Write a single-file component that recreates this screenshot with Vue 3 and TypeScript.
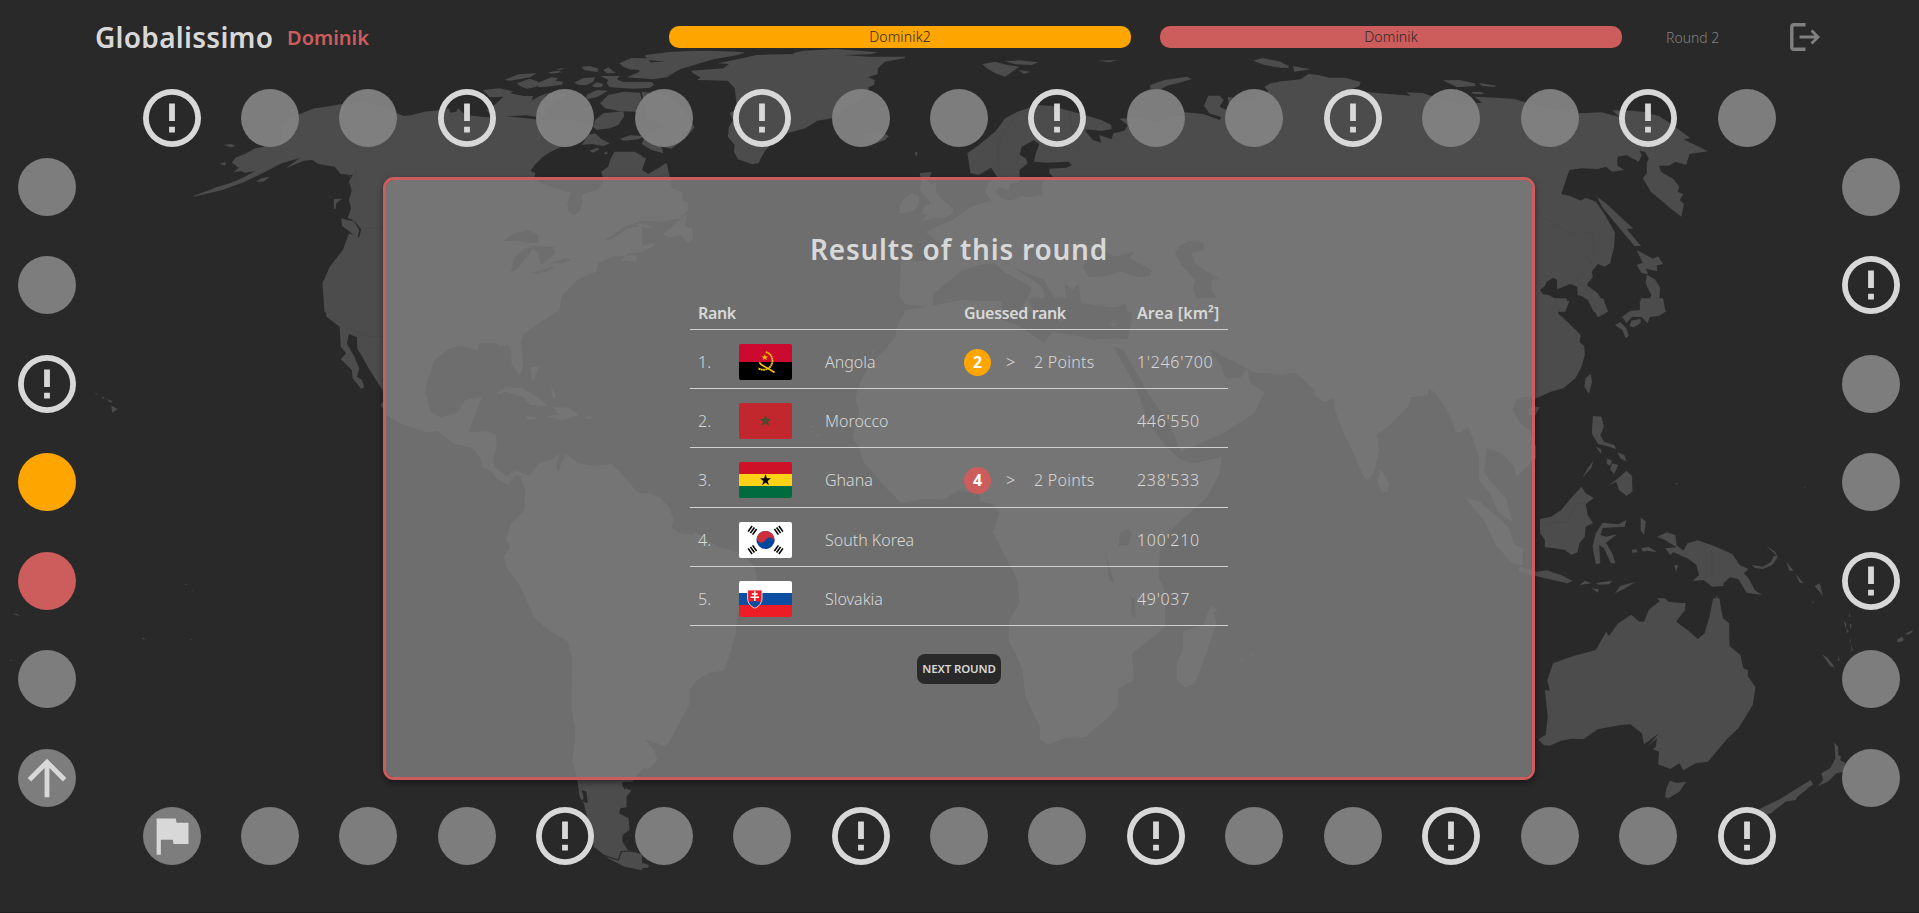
<script setup lang="ts">
type Field = 'plain' | 'event' | 'start' | 'arrow' | 'orange' | 'red'

interface Player {
  name: string
  color: Field
}

interface Guess {
  rank: number
  points: number
  color: Field
}

interface Country {
  flag: 'ao' | 'ma' | 'gh' | 'kr' | 'sk'
  name: string
  area: string
  guess?: Guess
}

const legend: Record<string, Field> = {
  o: 'plain',
  '!': 'event',
  s: 'start',
  a: 'arrow',
  y: 'orange',
  r: 'red',
}
const fields = (row: string): Field[] => row.split('').map((c) => legend[c])

const sides = [
  { name: 'top', fields: fields('!oo!oo!oo!oo!oo!o') },
  { name: 'left', fields: fields('oo!yroa') },
  { name: 'right', fields: fields('o!oo!oo') },
  { name: 'bottom', fields: fields('sooo!oo!oo!oo!oo!') },
]

const players: Player[] = [
  { name: 'Dominik2', color: 'orange' },
  { name: 'Dominik', color: 'red' },
]

const countries: Country[] = [
  { flag: 'ao', name: 'Angola', area: "1'246'700", guess: { rank: 2, points: 2, color: 'orange' } },
  { flag: 'ma', name: 'Morocco', area: "446'550" },
  { flag: 'gh', name: 'Ghana', area: "238'533", guess: { rank: 4, points: 2, color: 'red' } },
  { flag: 'kr', name: 'South Korea', area: "100'210" },
  { flag: 'sk', name: 'Slovakia', area: "49'037" },
]
</script>

<template>
  <div class="page">
    <svg class="map" viewBox="0 0 1919 913" aria-hidden="true">
      <!-- north-west -->
      <g transform="scale(.40816 .33333)">
        <path class="land" d="M474 588L530 562 565 549 600 530 625 513 600 518 590 513 572 517 585 503 568 488 578 472 600 462 625 445 660 438 690 425 690 385 705 360 735 342 770 325 800 320 840 311 900 305 940 320 970 338 988 348 1010 345 1040 335 1075 331 1100 325 1103 338 1118 335 1122 325 1140 345 1190 352 1250 350 1290 355 1330 360 1400 360 1455 375 1440 400 1400 438 1375 441 1350 455 1330 470 1310 495 1300 513 1312 520 1308 535 1320 545 1350 560 1380 572 1400 578 1390 610 1393 635 1405 645 1420 635 1428 600 1425 583 1465 570 1480 540 1473 515 1490 500 1495 480 1505 455 1555 455 1573 467V662L1530 680 1480 722 1500 715 1540 685 1573 680V755L1540 760 1520 782 1560 785V765L1500 770 1465 790 1460 815 1440 825 1410 842 1395 865 1375 890 1370 935H795L790 850 808 800 840 750 855 700 880 712 885 688 870 665 852 653 860 625 855 600 862 570 855 545 864 525 835 522 820 500 780 492 765 480 745 482 700 505 735 474 690 490 650 515 600 545 545 570 474 590Z" />
        <path class="land" d="M836 655L868 665 880 690 875 718 862 700 838 678ZM818 597L838 596 824 610 822 628 818 626ZM627 545L640 535 662 530 645 545ZM538 490L555 487 550 497ZM548 434L568 433 578 438 565 442Z" />
        <path class="water" d="M1230 722L1260 700 1290 690 1318 702 1320 730 1290 728 1265 722ZM1252 815L1260 775 1285 745 1310 740 1285 780 1265 810ZM1300 738L1358 740 1360 762 1340 780 1325 795 1318 760ZM1300 820L1350 800 1358 805 1320 822ZM1345 790L1385 775 1400 780 1375 790Z" />
        <path class="border" d="M882 425L845 462M820 480L880 560 862 580M885 685H938M870 500L875 550" />
      </g>
      <!-- canadian arctic -->
      <g transform="translate(480 40) scale(.33333)">
        <path class="land" d="M72 120L115 103 170 100 150 112 90 122ZM110 130L150 116 175 125 170 140 140 146 120 138ZM170 130L215 112 235 115 225 122 250 125 245 134 200 140 175 142ZM205 97L235 92 245 97 215 101ZM228 87L255 84 240 90ZM305 80L330 78 355 86 352 96 330 93 312 90ZM282 128L310 114 345 112 340 125 318 136 295 134ZM335 137L350 127 370 132 365 142 345 142ZM370 90L385 82 398 92 408 99 380 100ZM362 108L420 108 410 118 430 126 515 126 522 134 510 143 460 146 390 142 380 130 385 120ZM418 70L455 54 500 55 512 66 515 78 480 90 450 88 430 80ZM495 48L560 38 640 32 780 36 740 44 700 58 640 76 600 88 560 112 520 118 440 112 480 95 515 85 520 66 570 66 500 55ZM8 150L60 145 100 155 90 160 130 168 160 168 155 182 175 170 200 160 190 180 200 190 200 225 175 232 140 226 100 228 40 235 20 210 50 190 70 170 30 172ZM360 190L385 165 430 155 480 158 485 175 470 200 470 215 420 214 375 205ZM200 160L260 158 230 190 200 200ZM320 165L350 150 385 152 350 172 320 178ZM340 262L345 240 370 220 430 214 433 228 415 255 390 265 350 270ZM305 315L325 285 345 280 365 298 390 310 370 318 335 312ZM328 332L352 323 358 328 340 338ZM370 342L382 333 382 343ZM420 296L450 286 495 288 475 298 430 302ZM485 155L560 165 610 210 644 262 620 290 575 326 545 320 550 340 515 330 485 312 500 280 560 260 500 230Z" />
      </g>
      <!-- north -->
      <g transform="translate(640 0) scale(.40816 .33333)">
        <path class="land" d="M-6 465L15 475 5 510 20 522 50 500 65 488 73 530 78 565 103 575 105 600 118 608 118 630 98 655 50 665-6 662ZM115 640L88 670 55 705 75 712 100 705 118 728 130 715 128 685 110 680ZM-4 668L30 680 15 685-4 678ZM-4 740L38 730 30 742-4 758Z" />
        <path class="land" d="M12 165L80 155 170 152 257 157 240 165 170 180 110 200 60 230 30 235 0 225-4 190 60 185 20 180ZM125 212L205 205 218 192 190 190 250 175 285 165 375 162 378 158 400 152 480 147 583 157 565 163 500 165 560 170 650 170 648 175 600 185 583 205 582 222 560 232 575 240 573 255 560 262 560 275 540 300 510 320 490 345 470 355 435 362 405 385 365 398 340 410 315 440 305 455 290 490 275 493 240 478 230 455 232 435 215 410 218 380 228 360 220 340 238 325 232 265 215 242 140 240 148 232 130 220ZM0 248L30 247 32 258 0 264ZM590 396L610 408 600 420 575 432 545 425 550 405ZM673 458L680 455 678 470ZM838 192L870 185 900 195 930 200 915 212 895 230 870 220 850 205ZM893 184L930 181 975 187 960 195 920 193ZM928 210L958 215 940 222ZM1120 182L1170 180 1150 187ZM1250 255L1285 240 1340 230 1352 237 1320 248 1290 258 1275 268 1250 266ZM1502 182L1525 174 1573 186V204L1530 195Z" />
        <path class="land" d="M802 460L830 435 870 395 895 355 925 335 950 325 975 315 1010 318 1045 330 1090 345 1130 360 1155 375 1155 388 1130 393 1090 388 1095 400 1110 420 1130 428 1125 405 1155 418 1160 400 1187 392 1195 375 1175 356 1230 350 1260 370 1300 350 1335 345 1325 335 1380 342 1420 360 1425 352 1395 340 1382 318 1392 287 1420 287 1430 300 1420 320 1445 335 1440 290 1480 300 1540 275 1530 260 1545 250 1573 244V935H890L885 900 790 905 700 920 650 912 635 890 640 780 690 783 715 780 738 735 700 695 765 660 805 625 830 612 860 603 845 575 855 545 870 540 875 530 860 503 830 525 810 520Z" />
        <path class="land" d="M685 520L715 516 705 545 725 550 725 575 745 605 768 625 765 640 745 655 715 655 683 668 705 648 690 640 697 620 712 610 700 590 685 570 690 545ZM640 605L665 578 685 590 680 620 665 635 635 640Z" />
        <path class="water" d="M930 545V510L950 490 945 475 930 465 935 440 965 420 978 432 970 460 965 485 1000 488 1050 485 1058 495 1045 503 1003 506 1003 520 1015 535 985 545 985 585 960 590 935 588 910 602 885 594 870 575 880 560 905 572 905 550ZM1085 800L1095 780 1130 752 1165 770 1210 755 1200 775 1255 810 1250 828 1220 832 1180 815 1140 828 1100 830ZM1310 760L1325 735 1345 723 1380 728 1382 750 1350 760 1360 790 1395 820 1418 835 1400 840 1400 870 1420 905 1370 905 1355 870 1360 840 1330 800ZM715 935L720 880 750 850 785 815 830 795 870 790 890 815 960 860 950 895 930 935ZM875 770L985 860 1000 935H1195L1180 925 1080 910 1075 850 1060 870 1040 850 1045 910 1020 900 990 840 920 805Z" />
        <path class="border" d="M880 525L875 450 890 390 930 340 985 325M1050 335L1065 420 1075 445 1060 465" />
      </g>
      <!-- north-east -->
      <g transform="translate(1280 0) scale(.40751 .33333)">
        <path class="land" d="M-5 245L50 238 70 222 95 225 120 233 160 233 198 246 195 258 175 268 230 278 320 287 310 277 350 279 400 300 450 312 496 308 478 290 530 293 575 297 610 310 680 330 735 340 790 337 833 351 815 331 860 332 890 335 930 348 960 372 1007 414 990 418 1050 454 1005 462 997 494 970 485 955 497 930 497 935 515 965 537 980 560 976 575 990 583 981 600 991 612 985 650 960 627 910 575 890 535 900 520 900 490 905 475 895 455 882 452 888 465 880 485 850 465 828 470 828 497 845 510 815 515 800 500 780 507 740 505 710 510 690 583 710 587 738 602 750 593 775 605 795 640 822 697 820 740 810 790 797 800 780 792 765 815 768 830 752 855 780 880 805 935H770L755 900 740 888 730 885 730 860 712 852 680 868 680 840 670 833 655 845 650 858 638 870 645 883 660 885 680 900 710 903 700 935H-5ZM0 186L22 198 20 204 0 203ZM32 198L75 208 35 215ZM400 241L440 240 478 250 480 258 435 262ZM488 249L533 257 525 261 495 257ZM468 276L495 276 500 282 475 281Z" />
        <path class="land" d="M778 590L800 610 867 686 850 686 886 738 870 738 830 680 790 620ZM875 750L915 776 928 769 940 792 924 797 926 814 898 806 903 822 888 820 875 795 890 788ZM900 824L920 838 933 865 931 895 948 935H883V900L900 922 911 885 897 850Z" />
        <path class="border" d="M626 640L670 670 720 705M748 698L765 700 772 750 750 760 768 800 740 820 718 855" />
      </g>
      <!-- west -->
      <g transform="translate(0 300) scale(.40816 .33333)">
        <path class="land" d="M795-5V15L800 50 832 80 835 140 848 160 835 178 862 210 864 235 885 267 892 262 887 240 875 230 880 205 868 170 850 130 855 102 875 112 875 145 892 180 903 205 937 270 940 300 933 315 947 345 980 370 1045 398 1070 392 1110 430 1158 445 1180 480 1180 500 1205 515 1215 535 1245 555 1262 525 1275 530 1287 570 1285 630 1268 650 1250 675 1240 720 1250 740 1235 770 1240 800 1275 860 1304 935H1573V580L1560 575 1540 545 1500 492 1450 498 1415 488 1400 475 1388 463 1375 490 1368 520 1362 500 1370 460 1350 480 1320 488 1298 528 1265 513 1240 527 1212 500 1208 480 1217 430 1215 405 1190 393 1148 397 1165 340 1180 292 1140 300 1120 340 1080 352 1055 335 1042 275 1045 250 1065 180 1095 150 1125 138 1155 145 1170 150 1175 128 1215 128 1225 140 1245 135 1253 155 1253 190 1272 227 1282 200 1277 120 1285 100 1320 70 1368 30 1370-5ZM1210 285L1240 262 1280 265 1320 295 1343 318 1300 315 1280 290 1240 275ZM1340 347L1370 345 1355 322 1395 323 1418 345 1380 360 1345 352ZM1288 348L1310 350 1315 358 1293 359ZM1434 348L1453 349 1450 356 1435 356ZM1300 200L1320 200 1305 250ZM1350 260L1362 290 1355 300Z" />
        <path class="land" d="M272 316L288 327 275 338ZM233 279L238 281 236 284ZM249 288L257 294 252 297ZM260 297L276 304 271 308ZM453 852L457 852 456 856ZM471 869L473 872 471 874Z" />
        <path class="border" d="M848 82L870 92 905 109H938" />
      </g>
      <!-- centre -->
      <g transform="translate(640 300) scale(.40816 .33333)">
        <path class="land" d="M-5 580L25 580 50 595 70 620 82 655 78 685 100 700 130 705 135 695 190 740 250 760 280 800 287 830 275 870 240 935H-5ZM650 30L630 80 625 110 600 150 560 200 540 245 528 290 538 340 520 410 535 440 550 490 600 560 640 608 700 597 740 600 780 572 830 580 835 605 865 612 880 640 865 700 895 770 925 840 932 935H1285V870L1270 830 1275 740 1300 690 1390 590 1420 520 1425 470 1360 490 1325 480 1290 440 1245 370 1215 260 1160 140 1185 150 1240 270 1300 380 1325 455 1430 400 1505 340 1530 275 1495 250 1488 205 1470 235 1435 235 1420 190 1385 135 1365 150 1400 150 1470 195 1500 215 1573 224V-5H1200L1205 60 1195 118 1160 115 1110 120 1060 105 1010 95 990 128 925 75 875 55 890 30 885 3 790 0 700 20ZM1405 915L1415 935H1395Z" />
        <path class="water" d="M950-5H1070L1075 15 1150 30 1190 10 1195 45 1150 50 1050 40 1000 50 960 25ZM1175 700L1200 685 1205 705 1195 735 1173 738ZM1140 755L1150 800 1163 852 1150 840ZM1200 880L1212 935H1203Z" />
        <path class="land" d="M1020 55L1040 60 1030 65ZM1150 70L1175 68 1160 78ZM518 155L525 165 520 168ZM570 150L575 155 568 165ZM415 375L425 380 420 384ZM435 403L445 405 430 413Z" />
      </g>
      <!-- east -->
      <g transform="translate(1280 300) scale(.40751 .33333)">
        <path class="land" d="M-5 223L40 220 85 270 85 285 108 305 132 296 135 330 150 380 180 460 205 530 215 542 232 515 243 450 238 402 265 380 318 315 320 292 362 286 365 268 378 275 405 320 425 370 428 395 445 397 462 380 475 420 488 470 488 540 515 580 535 635 570 665 555 595 520 550 500 515 508 443 545 460 575 500 580 530 628 475 628 440 615 395 590 370 570 330 580 300 600 290 628 295 665 275 695 265 725 235 740 200 748 165 747 140 735 125 738 105 705 65 682 40 690 15 708 8 702-5H-5ZM758-5H793L805 35 780 52 768 25ZM885-5H940L946 35 930 48 908 50 902 70 888 52 865 50 850 68 840 52 835 55 860 32 888 30ZM822 75L835 67 850 85 856 108 848 114 840 90ZM862 62L885 56 885 70 868 82 858 78Z" />
        <path class="land" d="M245 505L268 550 265 575 250 578 240 550ZM452 590L490 605 560 680 575 735 596 745 595 795 570 790 530 735 500 660ZM590 800L630 815 655 811 675 820 690 825 718 843 705 850 650 835 585 815ZM608 330L620 318 637 322 627 345 612 345ZM762 222L766 245 758 282 747 260 750 235ZM768 348L789 350 795 380 786 405 795 425 820 435 826 448 800 437 780 432 765 400ZM775 440L788 448 788 462ZM802 475L815 482 810 497 802 492ZM828 457L845 465 850 485 835 475ZM815 490L830 495 820 522 810 508ZM768 484L765 502 742 533 755 505ZM805 557L830 535 850 512 864 528 865 575 850 587 832 570 825 545ZM638 657L665 650 690 630 710 600 740 560 750 580 770 594 750 612 755 645 768 670 750 680 748 710 735 730 730 757 715 765 700 750 675 745 650 742 650 720 638 700ZM792 668L830 673 850 660 846 680 792 684 786 705 800 710 827 703 800 728 815 760 823 790 812 790 795 745 783 735 786 790 775 793 767 740 775 700ZM885 652L898 665 893 705 885 690ZM863 749L875 748 877 757 865 758ZM887 744L905 741 925 757 900 752 890 755ZM925 710L950 697 970 705 973 735 990 752 1000 730 1025 721 1065 738 1110 762 1128 795 1150 807 1138 820 1150 835 1165 870 1183 885 1145 878 1125 838 1105 832 1088 850 1088 858 1060 860 1040 840 1013 843 1028 825 1022 795 1000 775 965 757 958 765 945 745 973 742 945 720ZM968 795L977 795 972 815ZM735 855L748 842 765 850ZM775 849L815 842 808 853 782 854ZM765 865L782 868 780 878ZM822 880L835 858 873 845 845 866ZM1158 795L1185 800 1205 785 1212 767 1222 770 1208 795 1185 807 1165 804ZM1193 738L1215 755 1222 775 1213 760ZM1243 785L1260 812 1250 812ZM1265 822L1285 850 1275 848ZM1290 825L1308 845ZM1312 858L1325 850 1332 888ZM1072 887L1083 935H1058ZM908 927L940 895 950 905 995 910 993 935H905ZM1286 560L1291 563H1287ZM972 549H975V553H972Z" />
        <path class="border" d="M645 658L655 672 690 665 705 667 725 610 755 609M1060 752V832" />
      </g>
      <!-- south-west -->
      <g transform="translate(0 600) scale(.40816 .33333)">
        <path class="land" d="M1288-5L1310 55 1350 95 1392 125 1402 180 1400 320 1410 400 1402 480 1413 530 1420 590 1430 610 1445 680 1455 740 1490 775 1530 800 1573 811V762L1540 753 1525 725 1525 705 1542 690 1540 655 1517 640 1520 625 1535 622 1535 590 1547 572 1525 560 1525 545 1550 545 1573 508V-5Z" />
        <path class="water" d="M1425 570L1437 575 1440 610 1425 603 1430 595Z" />
        <path class="line" d="M1470 762L1515 780 1522 755 1545 752M1535 550L1530 568" />
        <path class="land" d="M30 40L42 42 50 48 40 46ZM348 113L358 118 350 118ZM25 180H29V184ZM465 117H469V120Z" />
      </g>
      <!-- south -->
      <g transform="translate(640 600) scale(.40816 .33333)">
        <path class="land" d="M-5-5H240L235 100 218 170 205 212 170 218 140 240 122 270 122 310 110 340 85 395 70 430 60 437 12 418 35 450 42 480 25 505-5 508ZM932-5L930 10 905 60 903 120 935 200 945 290 980 380 980 420 1000 433 1040 415 1090 412 1140 360 1170 320 1172 265 1210 240 1205 160 1270 100 1286 80V-5ZM1400 12L1412 70 1390 150 1360 250 1335 262 1315 240 1315 190 1330 150 1330 95 1380 75ZM1470 175L1478 178 1475 185ZM1500 160L1505 163 1500 168ZM-3 785L22 795 20 803-3 805Z" />
        <path class="water" d="M1203-5H1212L1214 55 1205 45Z" />
      </g>
      <!-- south-east -->
      <g transform="translate(1280 600) scale(.40751 .33333)">
        <path class="land" d="M925-5H945L955 8 975 17 995 10 993 30 972 65 1000 90 1025 117 1042 100 1055 45 1063-5H1078L1087 55 1102 70 1103 138 1130 165 1137 205 1148 210 1148 228 1167 262 1160 315 1125 385 1095 420 1050 485 1020 490 990 511 980 490 958 507 928 493 930 455 915 448 922 440 925 415 903 438 930 400 893 433 888 400 860 373 835 375 780 388 745 417 715 416 690 422 662 437 647 435 634 418 652 405 657 350 650 270 662 272 656 240 670 190 720 168 775 150 800 95 807 108 830 70 862 44 880 64 893 65 905 30 920 15 942 14ZM957 542L975 549 997 545 980 575 953 595 945 592 948 565ZM1360 428L1370 440 1370 465 1377 470 1374 480 1388 490 1385 515 1365 520 1345 545 1320 558 1333 540 1328 520 1350 505 1363 475ZM1175 628L1230 595 1302 540 1308 553 1270 590 1265 600 1240 605 1205 640 1190 645ZM1330 163L1345 175 1362 203 1350 197ZM1515 118L1527 110 1531 120 1522 127 1514 125ZM1537 100L1553 90 1550 98 1538 105ZM1383 62L1390 72 1388 85ZM1390 85L1396 95 1391 98ZM1397 42H1399V52H1397ZM1398 70L1403 75 1400 90ZM1400 115V125H1397ZM1402 135L1406 152H1402ZM1369 170L1374 180 1369 182ZM1303 2L1310 6 1309 9Z" />
      </g>
    </svg>

    <header class="header">
      <h1 class="brand">Globalissimo</h1>
      <span class="me">Dominik</span>
      <div class="players">
        <div v-for="p in players" :key="p.name" class="player" :class="p.color"><span>{{ p.name }}</span></div>
      </div>
      <span class="round">Round 2</span>
      <svg class="logout" viewBox="0 0 30 28" fill="none">
        <path d="M15.5 1.8H4Q1.8 1.8 1.8 4V24Q1.8 26.2 4 26.2H15.5" stroke-width="3.4" />
        <path d="M9.5 14H27.5M21.6 7.5L28 14L21.6 20.5" stroke-width="2.9" />
      </svg>
    </header>

    <main class="board">
      <div v-for="side in sides" :key="side.name" class="side" :class="side.name">
        <div v-for="(f, i) in side.fields" :key="i" class="field" :class="f">
          <svg v-if="f === 'event'" viewBox="2 2 20 20">
            <path d="M11 15h2v2h-2zM11 7h2v6h-2zM12 2a10 10 0 1 0 0 20 10 10 0 0 0 0-20zm0 18a8 8 0 1 1 0-16 8 8 0 0 1 0 16z" />
          </svg>
          <svg v-else-if="f === 'arrow'" viewBox="0 0 24 24">
            <path d="M4 12l1.41 1.41L11 7.83V20h2V7.83l5.58 5.59L20 12l-8-8z" />
          </svg>
          <svg v-else-if="f === 'start'" class="pennant" viewBox="0 0 24 24">
            <path d="M14.4 6L14 4H5v17h2v-7h5.6l.4 2h7V6z" />
          </svg>
        </div>
      </div>

      <section class="results">
        <h2>Results of this round</h2>
        <table>
          <colgroup>
            <col class="c-rank" /><col class="c-flag" /><col class="c-name" /><col class="c-guess" /><col class="c-area" />
          </colgroup>
          <thead>
            <tr>
              <th class="tight">Rank</th>
              <th></th>
              <th></th>
              <th class="tight">Guessed rank</th>
              <th>Area [km²]</th>
            </tr>
          </thead>
          <tbody>
            <tr v-for="(c, i) in countries" :key="c.flag">
              <td>{{ i + 1 }}.</td>
              <td>
                <svg class="flag" viewBox="0 0 53 36">
                  <template v-if="c.flag === 'ao'">
                    <path fill="#cc092f" d="M0 0H53V18H0Z" />
                    <path fill="#000" d="M0 18H53V36H0Z" />
                    <g fill="none" stroke="#ffcb00">
                      <path stroke-width="1.8" stroke-dasharray="1.8 .4" d="M26.8 8.2C34 9.5 35.5 19 30.5 23.5 27 26.6 22 26.2 19.2 24.2" />
                      <path stroke-width="1.6" d="M20.3 18.3C22 22 27 22.5 35.5 28.5" />
                    </g>
                    <path fill="#ffcb00" d="M25.8 10.2L26.6 12.5 29 12.5 27.1 13.9 27.9 16.2 25.8 14.8 23.7 16.2 24.5 13.9 22.6 12.5 25 12.5Z" />
                  </template>
                  <template v-else-if="c.flag === 'ma'">
                    <path fill="#c1272d" d="M0 0H53V36H0Z" />
                    <path fill="none" stroke="#34542d" stroke-width="1.1" d="M26.5 13.4L29.1 21.4 22.3 16.5H30.7L23.9 21.4Z" />
                  </template>
                  <template v-else-if="c.flag === 'gh'">
                    <path fill="#ce1126" d="M0 0H53V12H0Z" />
                    <path fill="#fcd116" d="M0 12H53V24H0Z" />
                    <path fill="#006b3f" d="M0 24H53V36H0Z" />
                    <path fill="#000" d="M26.5 12L27.8 16.3H32L28.6 18.9 29.9 23.2 26.5 20.6 23.1 23.2 24.4 18.9 21 16.3H25.2Z" />
                  </template>
                  <template v-else-if="c.flag === 'kr'">
                    <path fill="#fff" d="M0 0H53V36H0Z" />
                    <g transform="rotate(25 26.5 18)">
                      <circle cx="26.5" cy="18" r="9" fill="#0047a0" />
                      <path fill="#cd2e3a" d="M17.5 18A9 9 0 0 1 35.5 18A4.5 4.5 0 0 0 26.5 18A4.5 4.5 0 0 1 17.5 18Z" />
                    </g>
                    <g stroke="#000" stroke-width="1.6">
                      <path d="M9.1 9.6L13.1 4M11.4 11.1L15.4 5.5M13.6 12.6L17.6 7" />
                      <path d="M43.9 9.6L39.9 4M41.6 11.1L37.6 5.5M39.4 12.6L35.4 7" />
                      <path d="M9.1 26.4L13.1 32M11.4 24.9L15.4 30.5M13.6 23.4L17.6 29" />
                      <path d="M43.9 26.4L39.9 32M41.6 24.9L37.6 30.5M39.4 23.4L35.4 29" />
                    </g>
                  </template>
                  <template v-else>
                    <path fill="#fff" d="M0 0H53V12H0Z" />
                    <path fill="#0b4ea2" d="M0 12H53V24H0Z" />
                    <path fill="#ee1c25" d="M0 24H53V36H0Z" />
                    <path fill="#ee1c25" d="M8.6 9H23V17C23 22 20 25.5 15.8 27.2 11.6 25.5 8.6 22 8.6 17Z" />
                    <path fill="#0b4ea2" d="M10 21.5Q11.5 19.5 13 21Q15.8 17.8 18.6 21Q20.1 19.5 21.6 21.5 19.5 25.2 15.8 26.7 12 25.2 10 21.5Z" />
                    <path fill="none" stroke="#fff" stroke-width=".8" d="M8.6 9H23V17C23 22 20 25.5 15.8 27.2 11.6 25.5 8.6 22 8.6 17Z" />
                    <path stroke="#fff" stroke-width="1.5" d="M15.8 10.3V20M12.8 13H18.8M11.5 16.2H20.1" />
                  </template>
                </svg>
              </td>
              <td>{{ c.name }}</td>
              <td>
                <div v-if="c.guess" class="guess">
                  <span class="badge" :class="c.guess.color">{{ c.guess.rank }}</span>
                  <span class="gt">&gt;</span>
                  <span class="points">{{ c.guess.points }} Points</span>
                </div>
              </td>
              <td class="area">{{ c.area }}</td>
            </tr>
          </tbody>
        </table>
        <button class="next" type="button">NEXT ROUND</button>
      </section>
    </main>
  </div>
</template>

<style>
html,
body {
  background: #1f1f1f;
  overflow: hidden;
}
</style>

<style scoped>
.page {
  position: relative;
  width: 1919px;
  height: 912px;
  overflow: hidden;
  background: #292929;
  color: #d8d8d8;
  font-family: 'Noto Sans', 'Open Sans', sans-serif;
}
.map {
  position: absolute;
  inset: 0;
  width: 1919px;
  height: 913px;
}
.land { fill: #4c4c4c; }
.water { fill: #292929; }
.border {
  fill: none;
  stroke: #484848;
  stroke-width: 2;
}
.line {
  fill: none;
  stroke: #292929;
  stroke-width: 3;
}
.header {
  position: relative;
  display: flex;
  align-items: center;
  height: 74px;
  padding-left: 95px;
}
.brand {
  width: 192px;
  margin: 0;
  font-size: 28px;
  font-weight: 600;
  letter-spacing: 0.28px;
  line-height: 40px;
  white-space: nowrap;
}
.me {
  width: 382px;
  color: #cd5c5c;
  font-size: 20px;
  font-weight: 600;
}
.players {
  display: flex;
  gap: 29px;
}
.player {
  width: 462px;
  height: 22px;
  border-radius: 10px;
  color: #292929;
  font-size: 14px;
  font-weight: 300;
  letter-spacing: 0.15px;
  line-height: 22px;
  text-align: center;
}
.orange { background: #ffa500; }
.red { background: #cd5c5c; }
.round {
  width: 124px;
  margin-left: 44px;
  color: #808080;
  font-size: 14px;
  font-weight: 300;
}
.logout {
  width: 30px;
  height: 28px;
  stroke: #808080;
}
.board {
  position: relative;
  display: grid;
  grid-template: 58px 660px 58px / 142.5px 1fr 143.5px;
  padding-top: 14.5px;
}
.side {
  display: flex;
  justify-content: space-between;
}
.top { grid-area: 1 / 2; }
.bottom { grid-area: 3 / 2; }
.left,
.right {
  grid-row: 2;
  flex-direction: column;
  align-items: center;
  margin-top: 11px;
}
.left { grid-column: 1; margin-right: 48.5px; }
.right { grid-column: 3; margin-left: 47.5px; }
.field {
  display: flex;
  align-items: center;
  justify-content: center;
  width: 58px;
  height: 58px;
  border-radius: 50%;
}
.field.plain,
.field.start,
.field.arrow { background: rgba(129, 129, 129, 0.96); }
.field svg {
  width: 58px;
  height: 58px;
  fill: #d8d8d8;
}
.field svg.pennant {
  width: 51px;
  height: 51px;
}
.results {
  grid-area: 2 / 2;
  justify-self: center;
  box-sizing: border-box;
  display: flex;
  flex-direction: column;
  align-items: center;
  width: 1152px;
  height: 603px;
  margin-top: 30.5px;
  border: 3px solid #cd5c5c;
  border-radius: 11px;
  background: rgba(128, 128, 128, 0.8);
  background-clip: padding-box;
  box-shadow: 0 3px 6px rgba(0, 0, 0, 0.4);
}
h2 {
  height: 40px;
  margin: 49px 0 0;
  font-size: 28px;
  font-weight: 600;
  letter-spacing: 0.78px;
  line-height: 40px;
}
table {
  width: 538px;
  margin-top: 29px;
  border-collapse: separate;
  border-spacing: 0;
  table-layout: fixed;
  font-size: 16px;
  font-weight: 300;
}
.c-rank { width: 41px; }
.c-flag { width: 86px; }
.c-name { width: 139px; }
.c-guess { width: 173px; }
.c-area { width: 99px; }
th,
td {
  box-sizing: border-box;
  padding: 0 0 0 8px;
  border-bottom: 1px solid #d0d0d0;
  text-align: left;
  white-space: nowrap;
}
th {
  height: 32px;
  padding-bottom: 2px;
  font-weight: 600;
  letter-spacing: 0.1px;
}
th.tight { letter-spacing: -0.35px; }
td {
  height: 59.2px;
  padding-top: 6px;
}
.area { letter-spacing: 0.68px; }
.flag {
  display: block;
  width: 53px;
  height: 36px;
  border-radius: 2px;
}
.guess {
  display: flex;
  align-items: center;
}
.badge {
  width: 27px;
  height: 27px;
  border-radius: 50%;
  color: #fff;
  font-weight: 700;
  line-height: 27px;
  text-align: center;
}
.gt {
  width: 28px;
  margin-left: 15px;
}
.points { letter-spacing: 0.28px; }
.next {
  width: 84px;
  height: 30px;
  margin-top: 28px;
  padding: 0;
  border: 0;
  border-radius: 8px;
  background: #292929;
  color: #d8d8d8;
  font: 600 11.5px 'Noto Sans', sans-serif;
  letter-spacing: -0.15px;
  white-space: nowrap;
}
</style>
